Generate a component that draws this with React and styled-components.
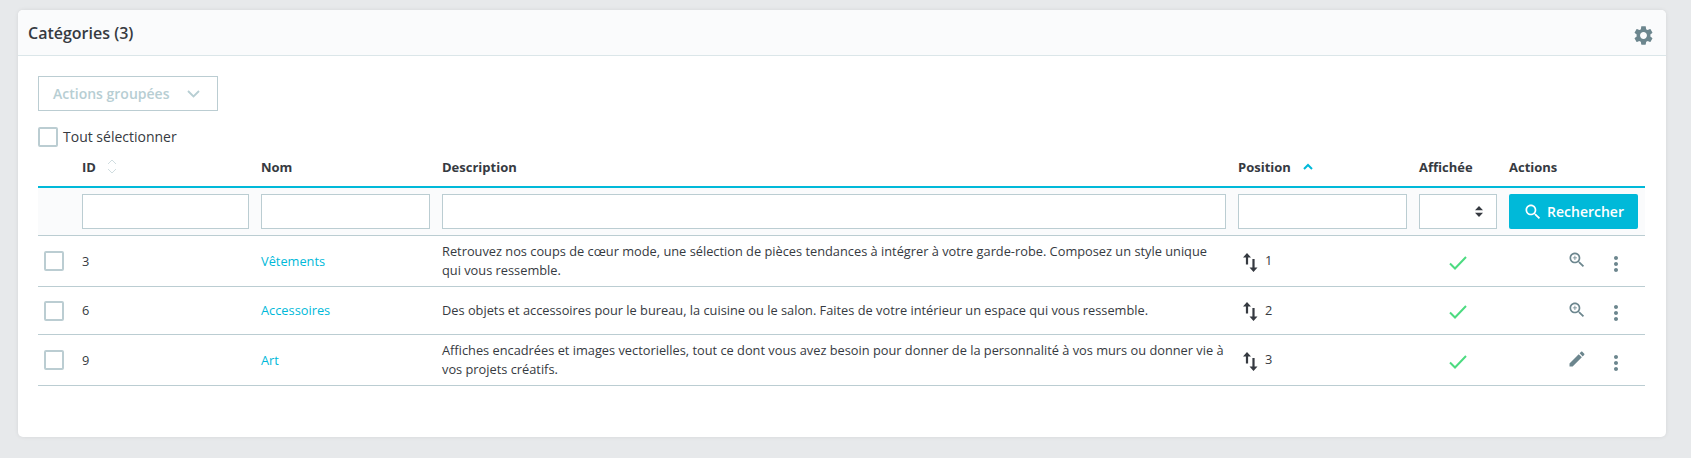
import React from "react";
import styled, { createGlobalStyle } from "styled-components";

const GlobalStyle = createGlobalStyle`
  html, body {
    margin: 0;
    padding: 0;
    background: #e7e9eb;
  }
  body {
    font-family: "Open Sans", "Liberation Sans", sans-serif;
    font-size: 13px;
    color: #363a41;
  }
`;

const Page = styled.div`
  width: 1691px;
  height: 458px;
  box-sizing: border-box;
  padding: 10px 25px 21px 18px;
`;

const Card = styled.section`
  height: 427px;
  box-sizing: border-box;
  background: #fff;
  border-radius: 5px;
  box-shadow: 0 0 4px rgba(0, 0, 0, 0.08);
  overflow: hidden;
`;

const CardHeader = styled.header`
  height: 46px;
  box-sizing: border-box;
  display: flex;
  align-items: center;
  justify-content: space-between;
  padding: 0 11px 0 10px;
  background: #fafbfc;
  border-bottom: 1px solid #dbe6e9;
`;

const Title = styled.h3`
  margin: 0;
  font-size: 16px;
  font-weight: 600;
  color: #363a41;
`;

const GearSlot = styled.span`
  display: flex;
  margin-top: 5px;
`;

const CardBody = styled.div`
  padding: 20px 21px 0 20px;
`;

const BulkButton = styled.button`
  width: 180px;
  height: 35px;
  box-sizing: border-box;
  display: flex;
  align-items: center;
  justify-content: space-between;
  padding: 0 17px 0 14px;
  background: #fff;
  border: 1px solid #bbcdd2;
  border-radius: 0;
  font: 600 14px "Open Sans", sans-serif;
  color: #b7ced3;
`;

const Check = styled.span`
  display: block;
  width: 20px;
  height: 20px;
  box-sizing: border-box;
  background: #fff;
  border: 2px solid #bbcdd2;
  border-radius: 2px;
  flex: none;
`;

const SelectAll = styled.label`
  display: flex;
  align-items: center;
  gap: 5px;
  margin-top: 16px;
  font-size: 14px;
  line-height: 20px;
`;

const Table = styled.table`
  width: 1607px;
  table-layout: fixed;
  border-collapse: collapse;
`;

const HeadCell = styled.th`
  height: 40px;
  padding: 0 6px;
  box-sizing: border-box;
  text-align: left;
  font-size: 13px;
  font-weight: 700;
  color: #363a41;
  border-bottom: 2px solid #00b9d9;
  white-space: nowrap;
`;

const SortIcon = styled.svg`
  margin-left: ${(p) => p.$gap}px;
  vertical-align: ${(p) => p.$lift}px;
`;

const FilterRow = styled.tr`
  background: #fafbfc;
`;

const FilterCell = styled.td`
  height: 47px;
  padding: 0 ${(p) => p.$right || 6}px 0 6px;
  border-bottom: 1px solid #bbcdd2;
`;

const FilterInput = styled.input`
  display: block;
  width: 100%;
  height: 35px;
  box-sizing: border-box;
  padding: 0 8px;
  background: #fff;
  border: 1px solid #bbcdd2;
  border-radius: 0;
  outline: 0;
`;

const SelectBox = styled.div`
  height: 35px;
  box-sizing: border-box;
  display: flex;
  align-items: center;
  justify-content: flex-end;
  padding-right: 13px;
  background: #fff;
  border: 1px solid #bbcdd2;
`;

const SearchButton = styled.button`
  width: 100%;
  height: 35px;
  box-sizing: border-box;
  display: flex;
  align-items: center;
  justify-content: center;
  gap: 4px;
  padding: 0;
  background: #00b9d9;
  border: 0;
  border-radius: 2px;
  color: #fff;
  font: 600 14px "Open Sans", sans-serif;
`;

const Row = styled.tr`
  height: ${(p) => p.$height}px;
`;

const Cell = styled.td`
  padding: 0 6px;
  font-size: 12.8px;
  line-height: 19px;
  color: #363a41;
  border-bottom: 1px solid #bbcdd2;
`;

const NameLink = styled.a`
  color: #00b9d9;
  text-decoration: none;
`;

const PositionWrap = styled.div`
  display: flex;
  align-items: center;
  gap: 7px;
  padding: 2px 0 0 5px;
`;

const PositionValue = styled.span`
  margin-bottom: 3px;
`;

const CheckWrap = styled.div`
  display: flex;
  justify-content: center;
  padding-top: 3px;
`;

const ActionsWrap = styled.div`
  display: flex;
  align-items: center;
  justify-content: flex-end;
  gap: 17px;
  padding-right: 11px;
`;

const RowAction = styled.span`
  display: flex;
  margin-bottom: 2px;
`;

const RowMenu = styled.span`
  display: flex;
  margin-top: 5px;
`;

const Icon = ({ d, size = 24, color = "#6c868e" }) => (
  <svg width={size} height={size} viewBox="0 0 24 24" fill={color} aria-hidden="true">
    <path d={d} />
  </svg>
);

const GEAR =
  "M19.14 12.94c.04-.3.06-.61.06-.94 0-.32-.02-.64-.07-.94l2.03-1.58c.18-.14.23-.41.12-.61l-1.92-3.32c-.12-.22-.37-.29-.59-.22l-2.39.96c-.5-.38-1.03-.7-1.62-.94l-.36-2.54c-.04-.24-.24-.41-.48-.41h-3.84c-.24 0-.43.17-.47.41l-.36 2.54c-.59.24-1.13.57-1.62.94l-2.39-.96c-.22-.08-.47 0-.59.22L2.74 8.87c-.12.21-.08.47.12.61l2.03 1.58c-.05.3-.09.63-.09.94s.02.64.07.94l-2.03 1.58c-.18.14-.23.41-.12.61l1.92 3.32c.12.22.37.29.59.22l2.39-.96c.5.38 1.03.7 1.62.94l.36 2.54c.05.24.24.41.48.41h3.84c.24 0 .44-.17.47-.41l.36-2.54c.59-.24 1.13-.56 1.62-.94l2.39.96c.22.08.47 0 .59-.22l1.92-3.32c.12-.22.07-.47-.12-.61l-2.01-1.58zM12 15.6c-1.98 0-3.6-1.62-3.6-3.6s1.62-3.6 3.6-3.6 3.6 1.62 3.6 3.6-1.62 3.6-3.6 3.6z";
const SEARCH =
  "M15.5 14h-.79l-.28-.27C15.41 12.59 16 11.11 16 9.5 16 5.91 13.09 3 9.5 3S3 5.91 3 9.5 5.91 16 9.5 16c1.61 0 3.09-.59 4.23-1.57l.27.28v.79l5 4.99L20.49 19l-4.99-5zm-6 0C7.01 14 5 11.99 5 9.5S7.01 5 9.5 5 14 7.01 14 9.5 11.99 14 9.5 14z";
const ZOOM_IN = SEARCH + "M12 10h-2v2H9v-2H7V9h2V7h1v2h2v1z";
const EDIT =
  "M3 17.25V21h3.75L17.81 9.94l-3.75-3.75L3 17.25zM20.71 7.04c.39-.39.39-1.02 0-1.41l-2.34-2.34c-.39-.39-1.02-.39-1.41 0l-1.83 1.83 3.75 3.75 1.83-1.83z";
const MORE =
  "M12 8c1.1 0 2-.9 2-2s-.9-2-2-2-2 .9-2 2 .9 2 2 2zm0 2c-1.1 0-2 .9-2 2s.9 2 2 2 2-.9 2-2-.9-2-2-2zm0 6c-1.1 0-2 .9-2 2s.9 2 2 2 2-.9 2-2-.9-2-2-2z";

const Chevron = () => (
  <svg width="13" height="8" viewBox="0 0 13 8" fill="none" stroke="#b7ced3" strokeWidth="1.8">
    <path d="M1 1l5.500 5.500L12 1" />
  </svg>
);

const SwapIcon = () => (
  <svg width="15" height="19" viewBox="0 0 15 19" fill="#363a41" aria-hidden="true">
    <path d="M4 0l4 4.500H5.100V11.500H2.900V4.500H0z" />
    <path d="M10.500 19l-4-4.500h2.900V6h2.200v8.500h2.900z" />
  </svg>
);

const GreenCheck = () => (
  <svg width="18" height="14" viewBox="0 0 18 14" fill="none" stroke="#4cdb80" strokeWidth="2">
    <path d="M1 7.500l5 5L17 1" />
  </svg>
);

const columns = [38, 179, 181, 796, 181, 90, 142];

const rows = [
  {
    id: 3,
    name: "Vêtements",
    height: 51,
    position: 1,
    icon: ZOOM_IN,
    description:
      "Retrouvez nos coups de cœur mode, une sélection de pièces tendances à intégrer à votre garde-robe. Composez un style unique qui vous ressemble.",
  },
  {
    id: 6,
    name: "Accessoires",
    height: 48,
    position: 2,
    icon: ZOOM_IN,
    description:
      "Des objets et accessoires pour le bureau, la cuisine ou le salon. Faites de votre intérieur un espace qui vous ressemble.",
  },
  {
    id: 9,
    name: "Art",
    height: 51,
    position: 3,
    icon: EDIT,
    description:
      "Affiches encadrées et images vectorielles, tout ce dont vous avez besoin pour donner de la personnalité à vos murs ou donner vie à vos projets créatifs.",
  },
];

export default function App() {
  return (
    <Page>
      <GlobalStyle />
      <Card>
        <CardHeader>
          <Title>Catégories (3)</Title>
          <GearSlot>
            <Icon d={GEAR} size={23} />
          </GearSlot>
        </CardHeader>
        <CardBody>
          <BulkButton type="button">
            Actions groupées
            <Chevron />
          </BulkButton>
          <SelectAll>
            <Check />
            Tout sélectionner
          </SelectAll>
          <Table>
            <colgroup>
              {columns.map((w, i) => (
                <col key={i} style={{ width: w }} />
              ))}
            </colgroup>
            <thead>
              <tr>
                <HeadCell />
                <HeadCell>
                  ID
                  <SortIcon $gap={11} $lift={-2} width="10" height="15" viewBox="0 0 10 15" fill="none" stroke="#d0dde0">
                    <path d="M1 5l4-4 4 4M1 10l4 4 4-4" />
                  </SortIcon>
                </HeadCell>
                <HeadCell>Nom</HeadCell>
                <HeadCell>Description</HeadCell>
                <HeadCell>
                  Position
                  <SortIcon $gap={12} $lift={2} width="10" height="7" viewBox="0 0 10 7" fill="none" stroke="#00b9d9" strokeWidth="2">
                    <path d="M1 6l4-4 4 4" />
                  </SortIcon>
                </HeadCell>
                <HeadCell>Affichée</HeadCell>
                <HeadCell>Actions</HeadCell>
              </tr>
            </thead>
            <tbody>
              <FilterRow>
                <FilterCell />
                <FilterCell><FilterInput /></FilterCell>
                <FilterCell><FilterInput /></FilterCell>
                <FilterCell><FilterInput /></FilterCell>
                <FilterCell><FilterInput /></FilterCell>
                <FilterCell>
                  <SelectBox>
                    <svg width="8" height="11" viewBox="0 0 8 11" fill="#363a41">
                      <path d="M4 0l4 4.300H0zM4 11L0 6.700h8z" />
                    </svg>
                  </SelectBox>
                </FilterCell>
                <FilterCell $right={7}>
                  <SearchButton type="button">
                    <Icon d={SEARCH} size={20} color="#fff" />
                    Rechercher
                  </SearchButton>
                </FilterCell>
              </FilterRow>
              {rows.map((row) => (
                <Row key={row.id} $height={row.height}>
                  <Cell><Check /></Cell>
                  <Cell>{row.id}</Cell>
                  <Cell><NameLink href="#">{row.name}</NameLink></Cell>
                  <Cell>{row.description}</Cell>
                  <Cell>
                    <PositionWrap>
                      <SwapIcon />
                      <PositionValue>{row.position}</PositionValue>
                    </PositionWrap>
                  </Cell>
                  <Cell><CheckWrap><GreenCheck /></CheckWrap></Cell>
                  <Cell>
                    <ActionsWrap>
                      <RowAction><Icon d={row.icon} size={20} /></RowAction>
                      <RowMenu><Icon d={MORE} size={24} /></RowMenu>
                    </ActionsWrap>
                  </Cell>
                </Row>
              ))}
            </tbody>
          </Table>
        </CardBody>
      </Card>
    </Page>
  );
}
